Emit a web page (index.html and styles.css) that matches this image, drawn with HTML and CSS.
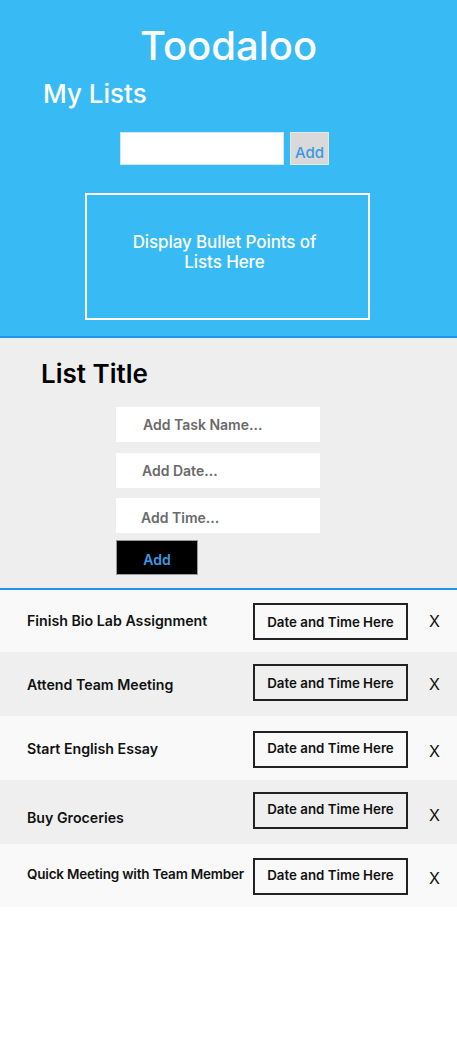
FILE: index.html
```html
<!DOCTYPE html>
<html>
<head>
<meta charset="utf-8">
<link rel="stylesheet" href="styles.css">
</head>
<body>
<header class="top">
  <h1 class="brand">Toodaloo</h1>
  <h2 class="lists-title">My Lists</h2>
  <div class="list-form">
    <div class="list-input"></div>
    <button class="list-add">Add</button>
  </div>
  <div class="bullets">
    <p>Display Bullet Points of<br>Lists Here</p>
  </div>
</header>
<section class="editor">
  <h2 class="list-title">List Title</h2>
  <div class="task-form">
    <div class="field f1">Add Task Name...</div>
    <div class="field f2">Add Date...</div>
    <div class="field f3">Add Time...</div>
    <button class="task-add">Add</button>
  </div>
</section>
<section class="tasks">
  <div class="row light r1"><span class="name">Finish Bio Lab Assignment</span><span class="when">Date and Time Here</span><span class="x">X</span></div>
  <div class="row dark r2"><span class="name">Attend Team Meeting</span><span class="when">Date and Time Here</span><span class="x">X</span></div>
  <div class="row light r3"><span class="name">Start English Essay</span><span class="when">Date and Time Here</span><span class="x">X</span></div>
  <div class="row dark r4"><span class="name">Buy Groceries</span><span class="when">Date and Time Here</span><span class="x">X</span></div>
  <div class="row light r5"><span class="name">Quick Meeting with Team Member</span><span class="when">Date and Time Here</span><span class="x">X</span></div>
</section>
</body>
</html>
```
FILE: styles.css
```css
* { box-sizing: border-box; }
html, body { margin: 0; padding: 0; background: #fff; }
body { font-family: Inter, "Noto Sans", sans-serif; width: 457px; }

.top {
  background: #38bbf5;
  height: 338px;
  border-bottom: 2px solid #1e95ea;
  padding-top: 24px;
}
.brand {
  margin: 0;
  text-align: center;
  color: #fff;
  font-size: 40px;
  font-weight: 500;
  line-height: 44px;
}
.lists-title {
  margin: 10px 0 0 43px;
  color: #fff;
  font-size: 26px;
  font-weight: 500;
  line-height: 32px;
}
.list-form {
  display: flex;
  margin: 22px 0 0 120px;
  gap: 6px;
  height: 33px;
}
.list-input {
  width: 164px;
  height: 33px;
  background: #fff;
  border: 1px solid #cfe9f7;
}
.list-add {
  width: 39px;
  height: 33px;
  background: #d9d9d9;
  border: 1px solid #e6e6e6;
  color: #3a98df;
  font-family: Inter, sans-serif;
  font-size: 15px;
  font-weight: 500;
  padding: 8px 0 0;
}
.bullets {
  margin: 28px 0 0 85px;
  width: 285px;
  height: 127px;
  border: 2px solid #fff;
  display: flex;
  justify-content: center;
  padding-right: 6px;
}
.bullets p {
  margin: 37px 0 0;
  color: #fff;
  font-size: 17px;
  font-weight: 500;
  line-height: 20px;
  text-align: center;
  letter-spacing: -0.1px;
}

.editor {
  background: #eeeeee;
  height: 252px;
  border-bottom: 2px solid #1e95ea;
  padding-top: 22px;
}
.list-title {
  margin: 0 0 0 41px;
  font-size: 26px;
  font-weight: 600;
  line-height: 28px;
  color: #000;
}
.task-form {
  margin: 19px 0 0 116px;
  display: flex;
  flex-direction: column;
  align-items: flex-start;
}
.field {
  width: 204px;
  height: 35px;
  background: #fff;
  color: #6a6a6a;
  font-size: 14px;
  font-weight: 600;
  line-height: 36px;
  padding-left: 27px;
}
.f2 { margin-top: 11px; padding-left: 26px; }
.f3 { margin-top: 10px; padding-left: 25px; line-height: 40px; }
.task-add {
  margin-top: 7px;
  width: 82px;
  height: 35px;
  background: #000;
  border: 1px solid #999;
  color: #3a9be3;
  font-family: Inter, sans-serif;
  font-size: 14px;
  font-weight: 600;
  padding: 4px 0 0;
}

.row {
  display: flex;
  align-items: center;
  height: 64px;
  padding-left: 27px;
  white-space: nowrap;
}
.light { background: #f9f9f9; }
.dark { background: #efefef; }
.r1 { height: 62px; }
.r5 { height: 63px; }
.name {
  width: 226px;
  font-size: 14.2px;
  font-weight: 600;
  color: #111;
}
.r5 .name { font-size: 13.5px; letter-spacing: -0.2px; }
.when {
  width: 155px;
  height: 37px;
  border: 2px solid #222;
  font-size: 13.3px;
  font-weight: 600;
  color: #111;
  text-align: center;
  line-height: 35px;
}
.x {
  margin-left: 21px;
  font-size: 16px;
  color: #111;
}
.r1 .name { margin-top: -2px; }
.r1 .when { margin-top: 1px; }
.r2 .when { margin-top: -4px; }
.r3 .when { margin-top: 2px; line-height: 30px; }
.r3 .x { margin-top: 6px; }
.r4 .name { margin-top: 10px; }
.r4 .when { margin-top: -4px; line-height: 30px; }
.r4 .x { margin-top: 6px; }
.r5 .name { margin-top: -4px; }
.r5 .when { margin-top: 2px; line-height: 30px; }
.r5 .x { margin-top: 4px; }
```
